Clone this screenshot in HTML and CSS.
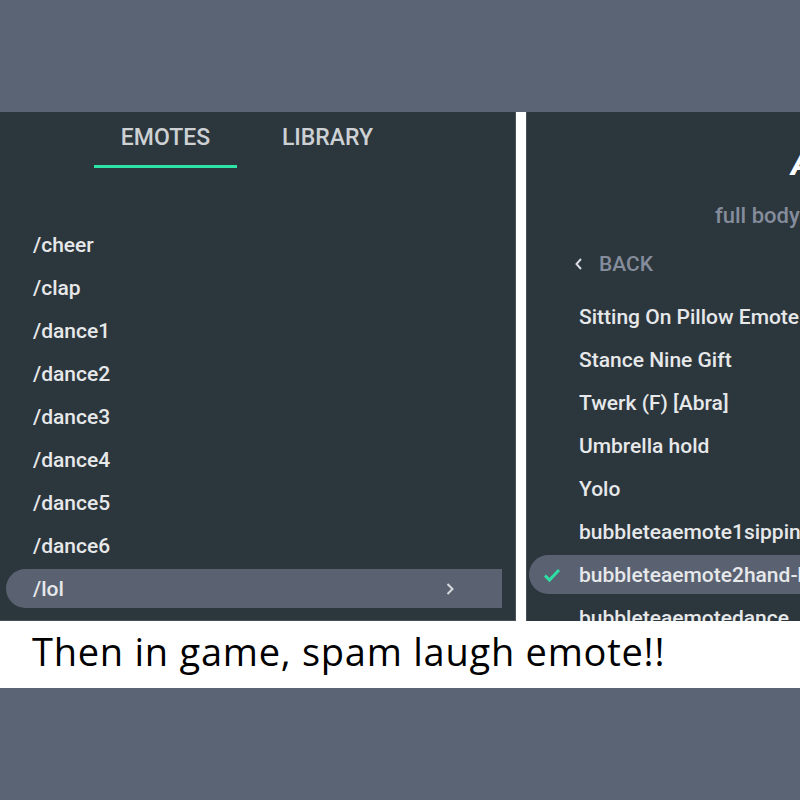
FILE: index.html
```html
<!DOCTYPE html>
<html>
<head>
<meta charset="utf-8">
<link rel="stylesheet" href="styles.css">
</head>
<body>
<div class="page">
  <div class="shot">
    <section class="panel left">
      <nav class="tabs">
        <div class="tab active">EMOTES</div>
        <div class="tab">LIBRARY</div>
      </nav>
      <ul class="list">
        <li class="item">/cheer</li>
        <li class="item">/clap</li>
        <li class="item">/dance1</li>
        <li class="item">/dance2</li>
        <li class="item">/dance3</li>
        <li class="item">/dance4</li>
        <li class="item">/dance5</li>
        <li class="item">/dance6</li>
        <li class="item selected">/lol
          <svg class="chev" width="10" height="14" viewBox="0 0 10 14"><path d="M2.5 2 L7.5 7 L2.5 12" fill="none" stroke="#d8dbde" stroke-width="2"/></svg>
        </li>
      </ul>
    </section>
    <div class="sep"></div>
    <section class="panel right">
      <div class="title">ANIMATIONS</div>
      <div class="subtitle">full body</div>
      <div class="back">
        <svg width="10" height="14" viewBox="0 0 10 14"><path d="M7 2 L2.5 7 L7 12" fill="none" stroke="#d8dbde" stroke-width="2"/></svg>
        <span>BACK</span>
      </div>
      <ul class="list rlist">
        <li class="item">Sitting On Pillow Emote</li>
        <li class="item">Stance Nine Gift</li>
        <li class="item">Twerk (F) [Abra]</li>
        <li class="item">Umbrella hold</li>
        <li class="item">Yolo</li>
        <li class="item">bubbleteaemote1sipping</li>
        <li class="item selected">
          <svg class="check" width="18" height="16" viewBox="0 0 18 16"><path d="M2 8.5 L6.5 13 L16 3" fill="none" stroke="#2ee0a4" stroke-width="3"/></svg>
          bubbleteaemote2hand-held
        </li>
        <li class="item">bubbleteaemotedance</li>
      </ul>
    </section>
  </div>
  <div class="caption">Then in game, spam laugh emote!!</div>
</div>
</body>
</html>
```

FILE: styles.css
```css
html, body {
  margin: 0;
  padding: 0;
  background: #5b6475;
  width: 800px;
  height: 800px;
  overflow: hidden;
}

.page {
  padding-top: 112px;
}

.shot {
  display: flex;
  height: 509px;
  background: #fff;
}

.panel {
  background: #2c363d;
  overflow: hidden;
  font-family: Roboto, "Liberation Sans", sans-serif;
  color: #e6e8ea;
}

.left {
  width: 516px;
  flex: none;
  box-shadow: inset -1px -1px 0 #4a5258;
}

.sep {
  width: 10px;
  flex: none;
  background: #fff;
}

.right {
  flex: 1;
  white-space: nowrap;
  box-shadow: inset 1px 0 0 #4a5258;
}

.tabs {
  display: flex;
  gap: 19px;
  padding-left: 94px;
}

.tab {
  width: 143px;
  text-align: center;
  font-size: 23px;
  font-weight: 500;
  line-height: 28px;
  padding-top: 12px;
  padding-bottom: 13px;
  border-bottom: 3px solid transparent;
  color: #cdd1d4;
}

.tab.active {
  border-bottom-color: #2ee3a6;
}

.list {
  list-style: none;
  margin: 0;
  padding: 0;
}

.left .list {
  margin-top: 57px;
  margin-right: 14px;
  margin-left: 6px;
}

.item {
  height: 39px;
  margin-bottom: 4px;
  display: flex;
  align-items: center;
  font-size: 21px;
  font-weight: 500;
  padding-left: 27px;
  border-radius: 20px 0 0 20px;
}

.item.selected {
  background: #5a6272;
}

.chev {
  margin-left: auto;
  margin-right: 47px;
}

.title {
  margin-top: 31px;
  line-height: 40px;
  font-size: 34px;
  font-weight: 700;
  font-style: italic;
  color: #ffffff;
  padding-left: 265px;
}

.subtitle {
  margin-top: 18px;
  line-height: 30px;
  font-size: 22px;
  font-weight: 500;
  color: #858d9c;
  padding-left: 189px;
}

.back {
  margin-top: 18px;
  line-height: 30px;
  height: 30px;
  display: flex;
  align-items: center;
  gap: 15px;
  padding-left: 48px;
  font-size: 21px;
  font-weight: 500;
  color: #858d9c;
}

.rlist {
  margin-top: 18px;
  margin-left: 3px;
}

.rlist .item {
  padding-left: 50px;
  position: relative;
}

.check {
  position: absolute;
  left: 14px;
  top: 12px;
}

.caption {
  background: #ffffff;
  height: 67px;
  line-height: 60px;
  padding-left: 32px;
  font-family: "Open Sans", "Noto Sans", sans-serif;
  font-size: 38px;
  letter-spacing: 0.75px;
  color: #000;
  white-space: nowrap;
}
```
